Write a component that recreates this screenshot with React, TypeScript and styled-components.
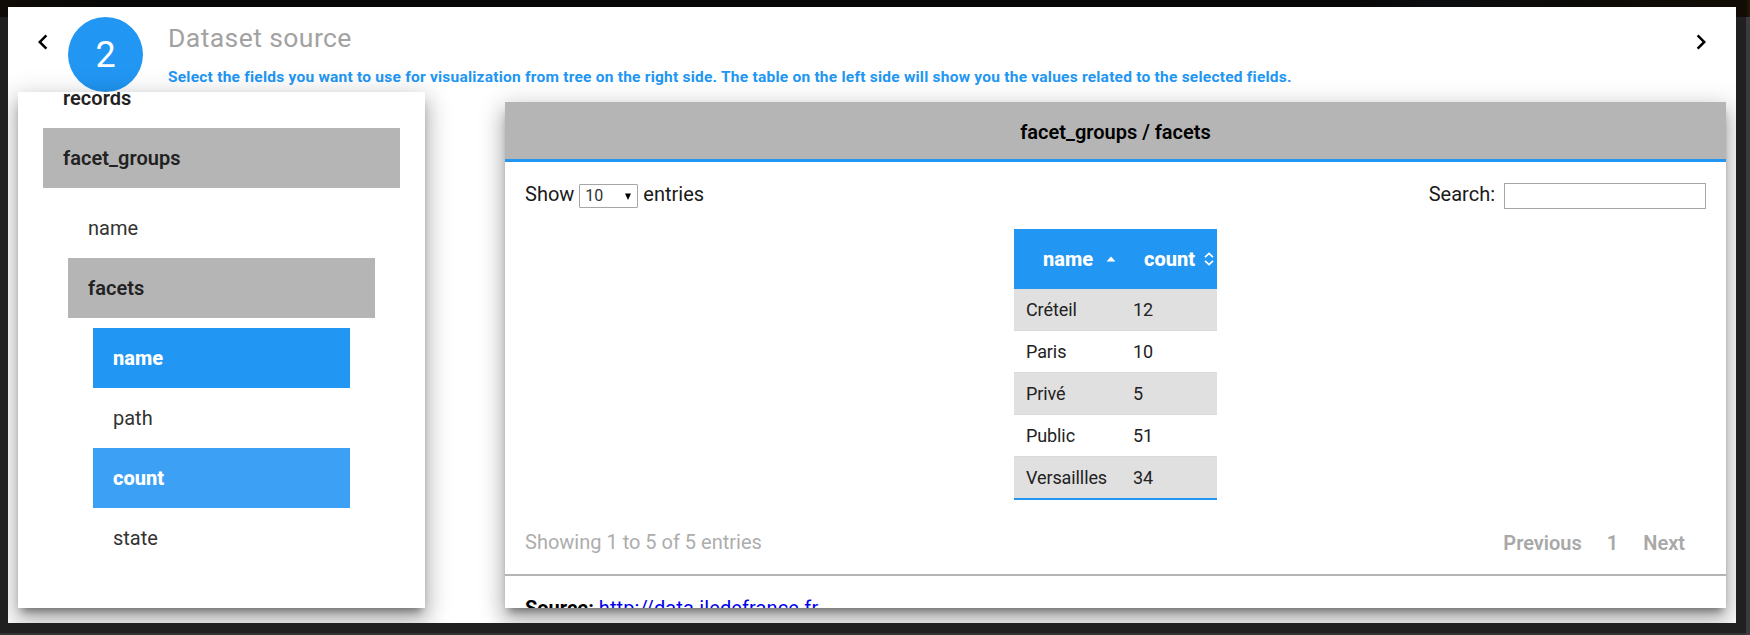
import React from 'react';
import styled, { createGlobalStyle, css } from 'styled-components';

const BLUE = '#2196f3';
const GREY = '#b5b5b5';

const Global = createGlobalStyle`
  *, *::before, *::after { box-sizing: border-box; }
  body { margin: 0; background: #202020; font-family: Roboto, 'Liberation Sans', sans-serif; font-size: 20px; font-weight: 400; color: #000; }
`;

const Backdrop = styled.div`
  width: 1750px;
  height: 635px;
  padding: 7px 14px 12px 8px;
  overflow: hidden;
  background:
    linear-gradient(90deg, #0f0b07 0, #070707 110px, #070707 1350px, #0b0d10 1430px, #0d0a06 1600px, #120c05 1746px, #2a1b08 1750px) 0 0 / 100% 17px no-repeat,
    linear-gradient(#3b3b3b, #3b3b3b) 100% 0 / 4px 100% no-repeat,
    linear-gradient(#333, #333) 0 100% / 100% 2px no-repeat,
    #202020;
`;

const Dialog = styled.main`
  display: flex;
  flex-direction: column;
  height: 616px;
  overflow: hidden;
  background: #fff;
`;

const Header = styled.header`
  display: flex;
  align-items: flex-start;
  height: 85px;
  padding: 10px 20px 0;
`;

const NavButton = styled.button`
  display: flex;
  width: 30px;
  height: 30px;
  margin-top: 10px;
  padding: 0;
  border: 0;
  background: none;
  svg { width: 30px; height: 30px; fill: #000; }
`;

const StepBadge = styled.div`
  display: flex;
  align-items: center;
  justify-content: center;
  width: 75px;
  height: 75px;
  margin: 0 25px 0 10px;
  border-radius: 50%;
  background: ${BLUE};
  color: #fff;
  font-size: 36px;
`;

const Titles = styled.div`
  flex: 1;
`;

const Title = styled.h1`
  margin: 4px 0 0;
  font-size: 26.5px;
  font-weight: 400;
  line-height: 33px;
  letter-spacing: 0.42px;
  color: #a2a2a2;
`;

const Subtitle = styled.p`
  margin: 13px 0 0;
  font-size: 15.5px;
  font-weight: 700;
  line-height: 20px;
  letter-spacing: 0.23px;
  white-space: nowrap;
  color: ${BLUE};
`;

const Body = styled.div`
  display: flex;
  justify-content: space-between;
  height: 516px;
  padding: 0 10px;
`;

const raised = css`
  overflow: hidden;
  background: #fff;
  box-shadow: 0 7px 8px -4px rgba(0, 0, 0, 0.42), 0 13px 19px 2px rgba(0, 0, 0, 0.19), 0 5px 24px 4px rgba(0, 0, 0, 0.15);
`;

const TreePanel = styled.aside`
  ${raised}
  display: flex;
  flex-direction: column;
  justify-content: flex-end;
  width: 407px;
  padding: 0 25px 40px;
`;

const Branch = styled.ul`
  margin: 0;
  padding: 10px 25px 0;
  list-style: none;
`;

const Root = styled(Branch)`
  padding: 0;
`;

type Tone = 'plain' | 'group' | 'openGroup' | 'selected' | 'hovered';

const tones = {
  plain: css`color: #333;`,
  group: css`color: #222; font-weight: 600; letter-spacing: 0.05px;`,
  openGroup: css`color: #222; font-weight: 600; letter-spacing: 0.05px; background: ${GREY};`,
  selected: css`color: #fff; font-weight: 800; background: ${BLUE};`,
  hovered: css`color: #fff; font-weight: 800; background: #3ca1f5;`,
};

const Node = styled.div<{ $tone: Tone }>`
  height: 60px;
  padding-left: 20px;
  line-height: 60px;
  ${({ $tone }) => tones[$tone]}
`;

const DataPanel = styled.section`
  ${raised}
  width: 1221px;
  height: 506px;
  margin-top: 10px;
`;

const PanelTitle = styled.h2`
  margin: 0;
  height: 60px;
  border-bottom: 3px solid ${BLUE};
  background: ${GREY};
  font-size: 20px;
  font-weight: 600;
  line-height: 60px;
  text-align: center;
`;

const Toolbar = styled.div`
  display: flex;
  justify-content: space-between;
  align-items: center;
  height: 67px;
  padding: 0 20px;
  color: #1a1a1a;
`;

const Control = styled.label`
  display: flex;
  align-items: center;
  height: 28px;
  line-height: 24px;
  margin-bottom: 4px;
`;

const PageSize = styled.span`
  display: flex;
  align-items: center;
  justify-content: space-between;
  width: 59px;
  height: 24px;
  margin: 5px 5px 0;
  padding: 0 6px 0 5px;
  border: 1px solid #a6a6a6;
  border-radius: 1px;
  font-size: 16px;
  line-height: 20px;
  color: #333;
  svg { width: 6px; height: 7px; fill: #000; }
`;

const SearchInput = styled.input`
  width: 202px;
  height: 26px;
  margin: 5px 0 0 9px;
  border: 1px solid #a6a6a6;
  background: #fff;
  font: inherit;
`;

const Table = styled.div`
  width: 203px;
  margin: 0 auto;
  border-bottom: 2px solid ${BLUE};
`;

const HeadRow = styled.div`
  display: grid;
  grid-template-columns: 107px 96px;
  height: 60px;
  background: ${BLUE};
  color: #fff;
  font-weight: 800;
`;

const HeadCell = styled.div<{ $indent: number; $end: number }>`
  display: flex;
  align-items: center;
  justify-content: space-between;
  padding: 0 ${({ $end }) => $end}px 0 ${({ $indent }) => $indent}px;
  svg { width: 10px; height: 14px; }
`;

const Row = styled.div`
  display: grid;
  grid-template-columns: 107px 96px;
  height: 42px;
  border-top: 1px solid #d9d9d9;
  font-size: 18px;
  line-height: 41px;
  letter-spacing: -0.1px;
  color: #222;
  &:nth-child(even) { background: #e0e0e0; }
  &:nth-child(2) { height: 41px; border-top: 0; }
`;

const Cell = styled.div`
  padding-left: 12px;
`;

const Footer = styled.div`
  display: flex;
  justify-content: space-between;
  height: 76px;
  padding: 0 41px 0 20px;
  border-bottom: 2px solid ${GREY};
  line-height: 84px;
  color: #adadad;
`;

const Pager = styled.nav`
  display: flex;
  gap: 25px;
  font-weight: 600;
  line-height: 86px;
  color: #a8a8a8;
`;

const Source = styled.p`
  margin: 19px 20px 0;
  line-height: 26px;
  b { font-weight: 700; }
  a { color: #0000ee; letter-spacing: 0.1px; }
`;

const Chevron = ({ right }: { right?: boolean }) => (
  <svg viewBox="0 0 24 24">
    <path d={right
      ? 'M10 6L8.59 7.41 13.17 12l-4.58 4.59L10 18l6-6z'
      : 'M15.41 7.41L14 6l-6 6 6 6 1.41-1.41L10.83 12z'} />
  </svg>
);

const rows: [string, number][] = [
  ['Créteil', 12],
  ['Paris', 10],
  ['Privé', 5],
  ['Public', 51],
  ['Versaillles', 34],
];

export default function App() {
  return (
    <Backdrop>
      <Global />
      <Dialog>
        <Header>
          <NavButton aria-label="Back"><Chevron /></NavButton>
          <StepBadge>2</StepBadge>
          <Titles>
            <Title>Dataset source</Title>
            <Subtitle>
              Select the fields you want to use for visualization from tree on the right side. The table on the left side will show you the values related to the selected fields.
            </Subtitle>
          </Titles>
          <NavButton aria-label="Forward"><Chevron right /></NavButton>
        </Header>
        <Body>
          <TreePanel>
            <Root>
              <li><Node $tone="group">records</Node></li>
              <li>
                <Node $tone="openGroup">facet_groups</Node>
                <Branch>
                  <li><Node $tone="plain">name</Node></li>
                  <li>
                    <Node $tone="openGroup">facets</Node>
                    <Branch>
                      <li><Node $tone="selected">name</Node></li>
                      <li><Node $tone="plain">path</Node></li>
                      <li><Node $tone="hovered">count</Node></li>
                      <li><Node $tone="plain">state</Node></li>
                    </Branch>
                  </li>
                </Branch>
              </li>
            </Root>
          </TreePanel>
          <DataPanel>
            <PanelTitle>facet_groups / facets</PanelTitle>
            <Toolbar>
              <Control>
                Show
                <PageSize>
                  10
                  <svg viewBox="0 0 6 7"><path d="M0 0.5h6L3 7z" /></svg>
                </PageSize>
                entries
              </Control>
              <Control>
                Search:
                <SearchInput />
              </Control>
            </Toolbar>
            <Table>
              <HeadRow>
                <HeadCell $indent={29} $end={5}>
                  name
                  <svg viewBox="0 0 10 14"><path d="M0.5 9.5L5 4.5l4.5 5z" fill="#fff" /></svg>
                </HeadCell>
                <HeadCell $indent={23} $end={3}>
                  count
                  <svg viewBox="0 0 10 14"><path d="M1 5.2L5 1.5 9 5.2M1 8.8L5 12.5 9 8.8" fill="none" stroke="#fff" strokeWidth="1.7" /></svg>
                </HeadCell>
              </HeadRow>
              {rows.map(([name, count]) => (
                <Row key={name}>
                  <Cell>{name}</Cell>
                  <Cell>{count}</Cell>
                </Row>
              ))}
            </Table>
            <Footer>
              <span>Showing 1 to 5 of 5 entries</span>
              <Pager>
                <span>Previous</span>
                <span>1</span>
                <span>Next</span>
              </Pager>
            </Footer>
            <Source><b>Source:</b> <a href="#source">http://data.iledefrance.fr</a></Source>
          </DataPanel>
        </Body>
      </Dialog>
    </Backdrop>
  );
}
